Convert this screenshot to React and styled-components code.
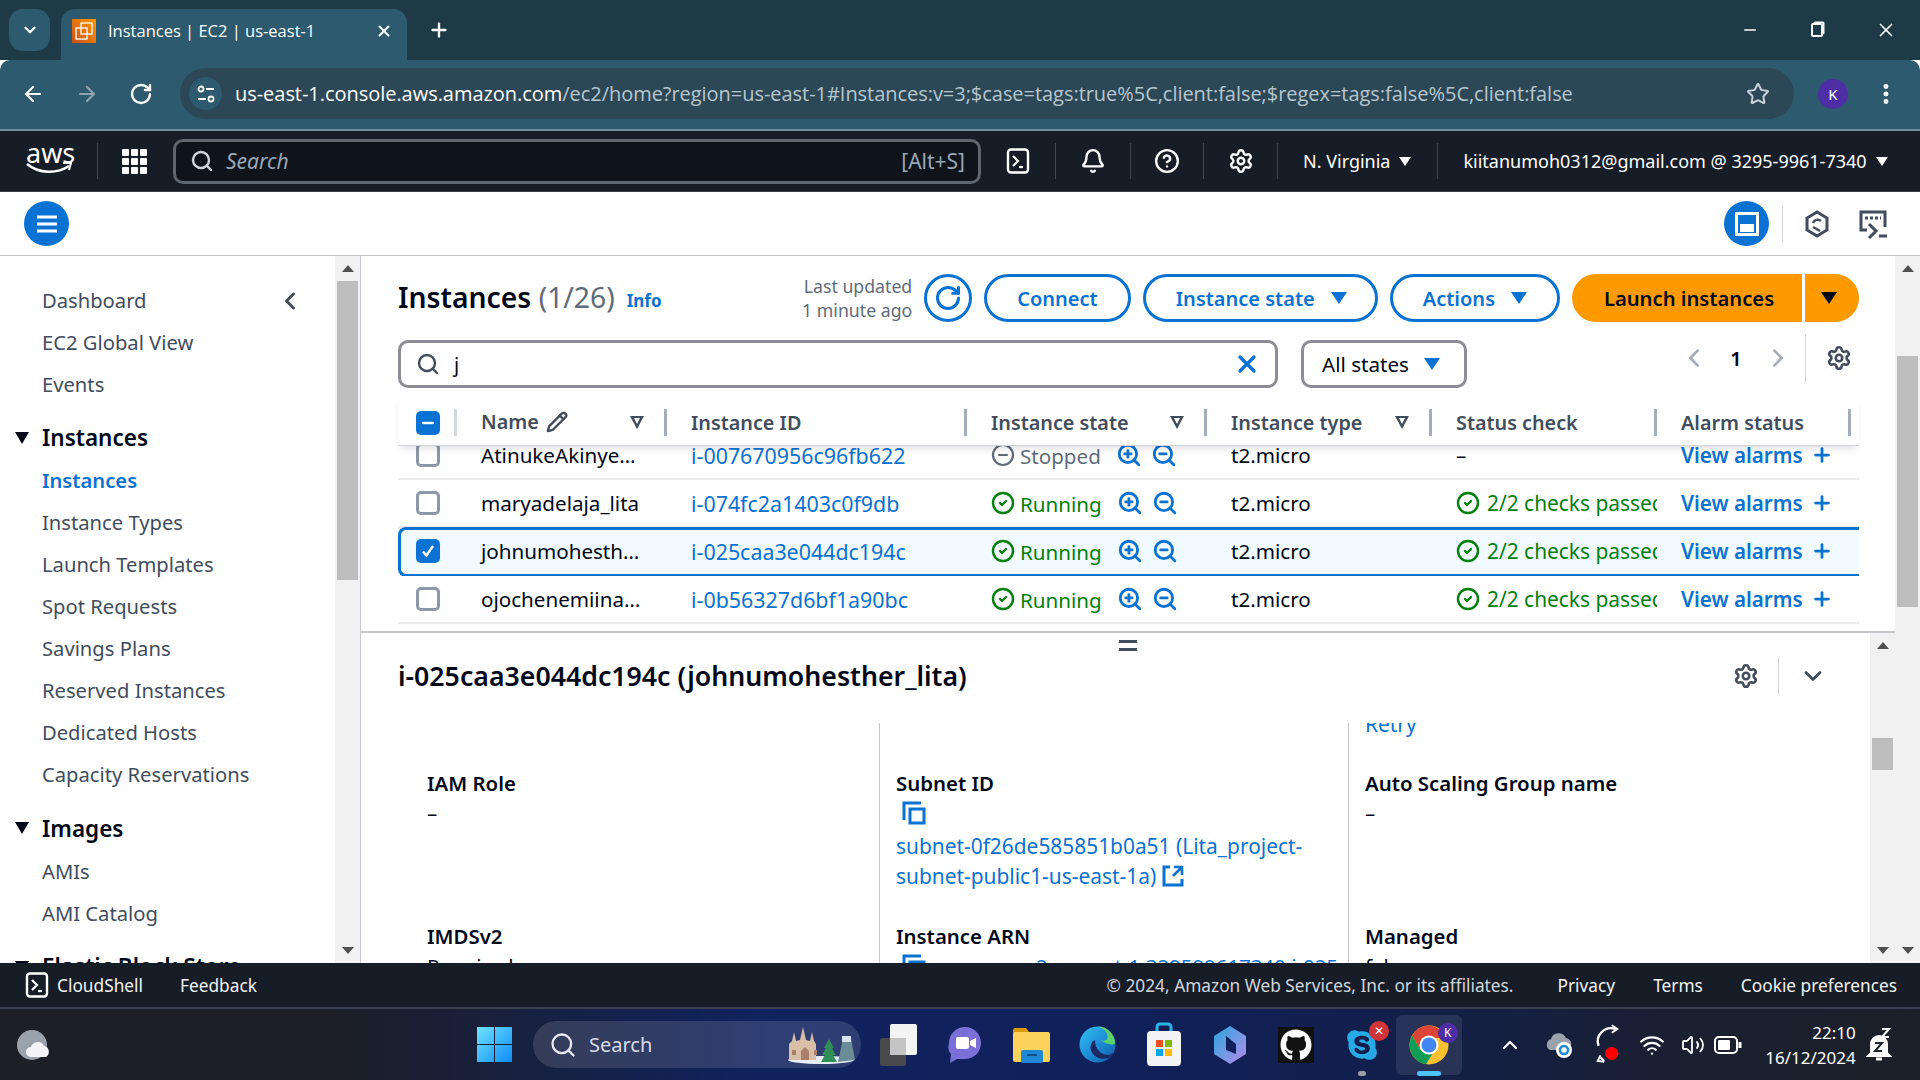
import React from 'react';
import styled, { createGlobalStyle } from 'styled-components';
import {
  ArrowLeft, ArrowRight, Bell, ChevronDown, ChevronLeft, ChevronRight, ChevronUp, CircleCheck,
  CircleHelp, CircleMinus, EllipsisVertical, Minus, Pencil, Plus, RotateCw, Search, Settings,
  Star, Volume2, Wifi, X, ZoomIn, ZoomOut,
} from 'lucide-react';
import { FaGithub, FaSkype } from 'react-icons/fa';

const LINK = '#0972d3';
const GREEN = '#037f0c';
const tableCols = '59px 210px 300px 240px 225px 225px 202px';

const GlobalStyle = createGlobalStyle`
  html, body { margin: 0; padding: 0; background: #fff; }
  * { box-sizing: border-box; }
  body { font-family: "Noto Sans", "Open Sans", sans-serif; color: #16191f; }
`;

const Page = styled.div`
  width: 1920px;
  height: 1080px;
  display: flex;
  flex-direction: column;
  overflow: hidden;
`;

/* chrome */
const TabStrip = styled.div`
  height: 60px;
  background: #1f3a47;
  display: flex;
  align-items: flex-start;
  padding: 9px 0 0 9px;
  color: #fff;
`;
const TabSearch = styled.div`
  width: 41px;
  height: 42px;
  border-radius: 14px;
  background: #2d5a6e;
  display: flex;
  align-items: center;
  justify-content: center;
`;
const Tab = styled.div`
  width: 346px;
  height: 51px;
  margin-left: 11px;
  background: #2d5a6e;
  border-radius: 14px 14px 0 0;
  display: flex;
  align-items: center;
  padding: 0 14px 8px 11px;
  font-family: "Open Sans", sans-serif;
  font-size: 16.5px;
`;
const Favicon = styled.div`
  width: 24px;
  height: 24px;
  background: linear-gradient(45deg, #c8511b, #ff9900);
  display: flex;
  align-items: center;
  justify-content: center;
`;
const TabTitle = styled.span`
  margin-left: 12px;
  flex: 1;
`;
const NewTab = styled.div`
  margin: 10px 0 0 21px;
  display: flex;
`;
const WinControls = styled.div`
  margin-left: auto;
  display: flex;
  align-items: center;
  height: 42px;
  gap: 52px;
  padding-right: 23px;
`;
const RestoreIcon = styled.div`
  width: 12px;
  height: 14px;
  border: 2px solid #fff;
  border-radius: 2px;
  box-shadow: 2px -2px 0 -0.5px #fff;
`;
const Toolbar = styled.div`
  height: 71px;
  background: #2d5a6e;
  border-bottom: 2px solid #6d8f9e;
  border-radius: 10px 10px 0 0;
  display: flex;
  align-items: center;
  padding: 0 0 2px 21px;
  color: #fff;
`;
const ToolIcon = styled.div`
  width: 54px;
  display: flex;
  opacity: ${p => (p.$dim ? 0.45 : 1)};
`;
const Omnibox = styled.div`
  width: 1614px;
  height: 51px;
  margin-left: -3px;
  background: #2c4857;
  border-radius: 26px;
  display: flex;
  align-items: center;
  padding: 0 24px 0 9px;
`;
const SiteInfo = styled.div`
  width: 33px;
  height: 33px;
  border-radius: 50%;
  background: #2d5a6e;
  display: flex;
  align-items: center;
  justify-content: center;
  flex: none;
`;
const Url = styled.div`
  margin-left: 13px;
  flex: 1;
  font-family: "Open Sans", sans-serif;
  font-size: 20px;
  letter-spacing: -0.04px;
  color: #b6c6ce;
  white-space: nowrap;
  b { font-weight: 400; color: #fff; }
`;
const Avatar = styled.div`
  width: 30px;
  height: 30px;
  margin-left: 24px;
  border-radius: 50%;
  background: #4e2ea5;
  font-size: 15px;
  display: flex;
  align-items: center;
  justify-content: center;
`;
const MenuDots = styled.div`
  margin-left: 25px;
  display: flex;
`;

/* aws nav */
const AwsNav = styled.div`
  height: 61px;
  background: #161d27;
  border-bottom: 1px solid #3b424c;
  display: flex;
  align-items: center;
  color: #fff;
  font-size: 18px;
`;
const Logo = styled.div`
  width: 98px;
  height: 36px;
  border-right: 1px solid #414750;
  padding-left: 26px;
  display: flex;
  flex-direction: column;
  font-size: 27px;
  line-height: 19px;
`;
const GridIcon = styled.div`
  width: 25px;
  height: 25px;
  margin: 0 26px 0 24px;
  display: grid;
  grid-template-columns: repeat(3, 7px);
  gap: 2px;
  span { background: #fff; border-radius: 1px; }
`;
const NavSearch = styled.div`
  width: 808px;
  height: 45px;
  background: #0f141a;
  border: 3px solid #5f6670;
  border-radius: 10px;
  display: flex;
  align-items: center;
  padding: 0 13px 0 14px;
  color: #9ba7b6;
  font-size: 21px;
`;
const NavPlaceholder = styled.span`
  font-style: italic;
  margin-left: 12px;
  flex: 1;
`;
const NavIconCell = styled.div`
  width: ${p => p.$w || 75}px;
  height: 36px;
  display: flex;
  align-items: center;
  justify-content: center;
  border-right: 1px solid #414750;
`;
const NavText = styled.div`
  display: flex;
  align-items: center;
  gap: 9px;
  white-space: nowrap;
  padding: 0 ${p => p.$pr || 0}px 0 ${p => p.$pl || 0}px;
  height: 36px;
  border-right: ${p => (p.$sep ? '1px solid #414750' : '0')};
`;
const Caret = styled.span`
  width: 0;
  height: 0;
  border-left: ${p => p.$s || 6}px solid transparent;
  border-right: ${p => p.$s || 6}px solid transparent;
  border-top: ${p => (p.$s || 6) * 1.6}px solid ${p => p.$c || '#fff'};
  flex: none;
`;

/* sub bar */
const SubBar = styled.div`
  height: 64px;
  border-bottom: 1px solid #c6c6cd;
  display: flex;
  align-items: center;
  padding: 0 32px 0 24px;
  background: #fff;
`;
const RoundBlue = styled.div`
  width: 45px;
  height: 45px;
  border-radius: 50%;
  background: ${LINK};
  display: flex;
  align-items: center;
  justify-content: center;
  margin-left: ${p => (p.$right ? 'auto' : 0)};
`;
const SubSep = styled.div`
  width: 1px;
  height: 36px;
  margin: 0 22px 0 13px;
  background: #d1d5db;
`;

/* body */
const Body = styled.div`
  height: 707px;
  display: flex;
  overflow: hidden;
`;
const Sidebar = styled.div`
  width: 361px;
  flex: none;
  display: flex;
  border-right: 1px solid #c6c6cd;
`;
const SideNav = styled.nav`
  width: 335px;
  padding: 22.5px 0 0 42px;
  position: relative;
  overflow: hidden;
`;
const SideCollapse = styled.div`
  position: absolute;
  top: 31px;
  left: 276px;
  display: flex;
`;
const SideItem = styled.div`
  height: 42px;
  line-height: 42px;
  font-size: 20.2px;
  white-space: nowrap;
  color: ${p => (p.$active ? LINK : '#414d5c')};
  font-weight: ${p => (p.$active ? 600 : 400)};
`;
const SideHead = styled.div`
  height: 42px;
  margin: 12px 0 0.5px -27px;
  display: flex;
  align-items: center;
  gap: 13px;
  font-size: 22.5px;
  font-weight: 600;
  color: #000716;
  white-space: nowrap;
`;
const Scrollbar = styled.div`
  width: 25px;
  flex: none;
  background: #f1f1f1;
  display: flex;
  flex-direction: column;
  padding: 0 2px 1px;
`;
const ScrollArrow = styled.div`
  height: 24px;
  flex: none;
  display: flex;
  align-items: center;
  justify-content: center;
  margin-top: ${p => (p.$down ? 'auto' : 0)};
  &::before {
    content: '';
    border-left: 6px solid transparent;
    border-right: 6px solid transparent;
    ${p => (p.$down ? 'border-top' : 'border-bottom')}: 7px solid #505050;
  }
`;
const Thumb = styled.div`
  flex: none;
  background: #bdbdbd;
  margin-top: ${p => p.$top}px;
  height: ${p => p.$h}px;
`;

const Main = styled.main`
  width: 1534px;
  flex: none;
  display: flex;
  flex-direction: column;
`;
const UpperPane = styled.section`
  height: 375px;
  padding: 18px 36px 0 37px;
  overflow: hidden;
`;
const HeadRow = styled.div`
  height: 48px;
  display: flex;
  align-items: center;
`;
const Title = styled.h1`
  margin: 0 0 2px;
  font-size: 28.3px;
  font-weight: 600;
  color: #000716;
  white-space: nowrap;
  span { font-weight: 400; color: #5f6b7a; }
`;
const InfoLink = styled.a`
  margin: 5px 0 0 12px;
  font-size: 17px;
  font-weight: 700;
  color: ${LINK};
`;
const Updated = styled.div`
  margin-left: auto;
  text-align: right;
  font-size: 17.7px;
  line-height: 24px;
  color: #5f6b7a;
  white-space: nowrap;
`;
const RefreshBtn = styled.div`
  width: 48px;
  height: 48px;
  margin: 0 12px;
  border: 3px solid ${LINK};
  border-radius: 50%;
  display: flex;
  align-items: center;
  justify-content: center;
`;
const Btn = styled.div`
  height: 48px;
  border: 3px solid ${LINK};
  border-radius: 24px;
  padding: 0 ${p => p.$pr || 30}px 0 30px;
  margin-right: ${p => p.$mr || 14}px;
  display: flex;
  align-items: center;
  gap: 16px;
  color: ${LINK};
  font-size: 20px;
  font-weight: 600;
  white-space: nowrap;
`;
const LaunchBtn = styled.div`
  width: 230px;
  height: 48px;
  padding-left: 4px;
  background: #ff9900;
  border-radius: 24px 0 0 24px;
  display: flex;
  align-items: center;
  justify-content: center;
  font-size: 20.2px;
  font-weight: 600;
  color: #000716;
  white-space: nowrap;
`;
const LaunchDrop = styled.div`
  width: 54px;
  height: 48px;
  margin-left: 3px;
  padding-right: 6px;
  background: #ff9900;
  border-radius: 0 24px 24px 0;
  display: flex;
  align-items: center;
  justify-content: center;
`;
const FilterRow = styled.div`
  height: 48px;
  margin-top: 18px;
  display: flex;
  align-items: center;
`;
const FilterBox = styled.div`
  width: 880px;
  height: 48px;
  border: 3px solid #8d8d95;
  border-radius: 10px;
  display: flex;
  align-items: center;
  padding: 0 14px 0 15px;
  font-size: 20px;
  color: #000716;
`;
const FilterValue = styled.span`
  margin-left: 14px;
  flex: 1;
`;
const StatesSelect = styled.div`
  width: 166px;
  height: 48px;
  margin-left: 23px;
  border: 3px solid #8d8d95;
  border-radius: 10px;
  display: flex;
  align-items: center;
  padding-left: 18px;
  gap: 15px;
  font-size: 20.6px;
  color: #000716;
  white-space: nowrap;
`;
const Pager = styled.div`
  margin: -12px 0 0 auto;
  display: flex;
  align-items: center;
  font-size: 20px;
  font-weight: 600;
  color: #000716;
`;
const PageNum = styled.span`
  width: 54px;
  text-align: center;
`;
const PagerGear = styled.div`
  height: 48px;
  width: 54px;
  margin-left: 12px;
  border-left: 1px solid #d1d5db;
  display: flex;
  align-items: center;
  padding-left: 20px;
`;
const TableHead = styled.div`
  height: 50px;
  margin-top: 8px;
  padding-top: 4px;
  display: grid;
  grid-template-columns: ${tableCols};
  align-items: center;
  position: relative;
  z-index: 2;
  background: #fff;
  border-bottom: 1px solid #d1d5db;
  box-shadow: 0 5px 8px -3px rgba(0, 7, 22, 0.14);
`;
const HeadCell = styled.div`
  height: 27px;
  display: flex;
  align-items: center;
  justify-content: space-between;
  padding: 0 20px 0 24px;
  margin-right: ${p => (p.$last ? 8 : 0)}px;
  border-right: 3px solid #a5adb8;
  color: #414d5c;
  font-size: 19.8px;
  font-weight: 600;
  white-space: nowrap;
`;
const CheckCell = styled(HeadCell)`
  padding: 0 0 0 18px;
  border-right: 3px solid #d5d8dc;
`;
const NameLabel = styled.span`
  display: flex;
  align-items: center;
  gap: 7px;
  margin-top: -2px;
`;
const FilterCaret = styled.span`
  width: 0;
  height: 0;
  position: relative;
  border-left: 7px solid transparent;
  border-right: 7px solid transparent;
  border-top: 13px solid #414d5c;
  &::after {
    content: '';
    position: absolute;
    top: -11px;
    left: -3.5px;
    border-left: 3.5px solid transparent;
    border-right: 3.5px solid transparent;
    border-top: 6.5px solid #fff;
  }
`;
const Check = styled.div`
  width: 24px;
  height: 24px;
  border-radius: 5px;
  border: ${p => (p.$on ? '0' : '3px solid #8d99a8')};
  background: ${p => (p.$on ? LINK : '#fff')};
  display: flex;
  align-items: center;
  justify-content: center;
  flex: none;
`;
const TableBody = styled.div`
  height: 185px;
  overflow: hidden;
`;
const RowList = styled.div`
  margin-top: -14px;
`;
const Row = styled.div`
  height: 48px;
  display: grid;
  grid-template-columns: ${tableCols};
  align-items: center;
  position: relative;
  font-size: 20.6px;
  color: #000716;
  background: ${p => (p.$sel ? '#f1faff' : '#fff')};
  border-bottom: 2px solid ${p => (p.$sel ? 'transparent' : '#e9ebed')};
  ${p => p.$sel && `
    &::before {
      content: '';
      position: absolute;
      inset: -1px 0 -3px;
      border: 3px solid ${LINK};
      border-right: 0;
      border-radius: 8px 0 0 8px;
      pointer-events: none;
    }
  `}
`;
const Cell = styled.div`
  padding-left: ${p => (p.$check ? 18 : 24)}px;
  display: flex;
  align-items: center;
  gap: ${p => p.$gap || 0}px;
  white-space: nowrap;
  overflow: hidden;
  min-width: 0;
  font-size: ${p => p.$fs || 20.6}px;
  color: ${p => p.$color || 'inherit'};
  font-weight: ${p => (p.$bold ? 600 : 400)};
`;
const StateText = styled.span`
  margin: 2px 15px 0 5px;
  color: ${p => p.$color};
`;
const StatusClip = styled.span`
  color: ${GREEN};
  margin-left: 7px;
  font-size: 20.9px;
`;
const ZoomBtn = styled.span`
  display: flex;
  margin-right: 9px;
`;

/* lower */
const LowerPane = styled.section`
  height: 332px;
  display: flex;
  border-top: 2px solid #c6c6cd;
  position: relative;
`;
const DragHandle = styled.div`
  position: absolute;
  top: 7px;
  left: 758px;
  width: 18px;
  height: 11px;
  border-top: 3px solid #414d5c;
  border-bottom: 3px solid #414d5c;
`;
const LowerContent = styled.div`
  width: 1509px;
  padding: 0 0 0 37px;
  display: flex;
  flex-direction: column;
  overflow: hidden;
`;
const DetailHead = styled.div`
  height: 90px;
  flex: none;
  display: flex;
  align-items: center;
  padding-bottom: 5px;
`;
const DetailTitle = styled.h2`
  margin: 0;
  font-size: 26.7px;
  font-weight: 600;
  color: #000716;
  white-space: nowrap;
`;
const DetailTools = styled.div`
  margin-left: auto;
  display: flex;
  align-items: center;
  padding-right: 43px;
`;
const ToolSep = styled.div`
  width: 1px;
  height: 36px;
  margin: 0 20px 0 19px;
  background: #d1d5db;
`;
const Columns = styled.div`
  flex: 1;
  display: flex;
  min-height: 0;
`;
const Col = styled.div`
  width: ${p => p.$w}px;
  padding: 45px 0 0 ${p => p.$pl}px;
  border-right: ${p => (p.$sep ? '1px solid #c6c6cd' : 0)};
  overflow: hidden;
  flex: none;
`;
const Field = styled.div`
  height: 153px;
  font-size: 20.4px;
  line-height: 30px;
  color: #000716;
`;
const FieldLabel = styled.div`
  font-weight: 600;
`;
const FieldLink = styled.div`
  color: ${LINK};
  font-size: 20.9px;
`;
const Retry = styled.div`
  color: ${LINK};
  font-size: 20.9px;
  line-height: 30px;
  margin: -59px 0 29px;
  height: 30px;
`;
const CopyLine = styled.div`
  height: 30px;
  margin: 0 0 3px 6px;
  display: flex;
  align-items: center;
  gap: 8px;
  white-space: nowrap;
  color: ${LINK};
`;
const ExtIcon = styled.span`
  display: inline-flex;
  vertical-align: -3px;
  margin-left: 6px;
`;

/* footer */
const Footer = styled.footer`
  height: 46px;
  background: #161d27;
  border-bottom: 2px solid #3a4150;
  display: flex;
  align-items: center;
  padding: 0 23px 0 24px;
  color: #f2f3f3;
  font-size: 17.3px;
  white-space: nowrap;
`;
const ShellLink = styled.div`
  display: flex;
  align-items: center;
  gap: 7px;
`;
const FootLink = styled.span`
  margin-left: ${p => p.$ml}px;
  color: ${p => (p.$dim ? '#d1d5db' : '#f2f3f3')};
`;
const FootCopy = styled(FootLink)`
  margin-left: auto;
`;

/* taskbar */
const Taskbar = styled.div`
  height: 71px;
  background: linear-gradient(90deg, #1c1f26 0%, #1c1f26 17%, #11225f 40%, #10205a 58%, #121f4c 72%, #1a2030 88%, #1b2029 100%);
  display: flex;
  align-items: center;
  color: #fff;
`;
const Weather = styled.div`
  margin-left: 17px;
  width: 460px;
  display: flex;
`;
const StartIcon = styled.div`
  width: 56px;
  display: flex;
`;
const TaskSearch = styled.div`
  width: 328px;
  height: 47px;
  background: rgba(255, 255, 255, 0.13);
  border-radius: 24px;
  display: flex;
  align-items: center;
  padding: 0 5px 0 16px;
  font-size: 20px;
  color: #d8dce6;
`;
const TaskSearchText = styled.span`
  margin-left: 12px;
  flex: 1;
`;
const TaskIcons = styled.div`
  margin-left: 5px;
  display: flex;
`;
const TaskSlot = styled.div`
  width: 66.2px;
  height: 60px;
  display: flex;
  align-items: center;
  justify-content: center;
  position: relative;
  border-radius: 6px;
  background: ${p => (p.$active ? 'rgba(255,255,255,0.09)' : 'transparent')};
`;
const GithubTile = styled.div`
  background: #111;
  padding: 2px;
  display: flex;
`;
const TaskDot = styled.span`
  position: absolute;
  bottom: -1px;
  left: 50%;
  transform: translateX(-50%);
  width: ${p => p.$w}px;
  height: 5px;
  border-radius: 3px;
  background: ${p => p.$c};
`;
const Badge = styled.span`
  position: absolute;
  top: ${p => p.$top}px;
  right: ${p => p.$right}px;
  width: 20px;
  height: 20px;
  border-radius: 50%;
  background: ${p => p.$bg};
  color: #fff;
  font-size: 12px;
  display: flex;
  align-items: center;
  justify-content: center;
`;
const Tray = styled.div`
  flex: 1;
  margin-left: 10px;
  display: flex;
  align-items: center;
  padding-left: 23px;
`;
const TraySlot = styled.div`
  width: ${p => p.$w}px;
  display: flex;
  justify-content: center;
`;
const Clock = styled.div`
  width: 105px;
  text-align: right;
  font-size: 17px;
  line-height: 25px;
`;

const Terminal = ({ size = 26 }) => (
  <svg width={size} height={size} viewBox="0 0 26 26" fill="none" stroke="#fff">
    <rect x="3" y="1.5" width="20" height="23" rx="3" strokeWidth="2.4" />
    <path d="M8 8l5 5-5 5" strokeWidth="2.2" />
    <path d="M14 19h4" strokeWidth="2.2" />
  </svg>
);

const Tick = () => (
  <svg width="16" height="16" viewBox="0 0 16 16" fill="none" stroke="#fff" strokeWidth="2.4">
    <path d="M3 8.5l3.4 4L13 3" />
  </svg>
);

const CopyIcon = () => (
  <svg width="24" height="24" viewBox="0 0 24 24" fill="none" stroke={LINK} strokeWidth="3" style={{ flex: 'none' }}>
    <path d="M2 19V2h17" />
    <rect x="8" y="8" width="14" height="14" />
  </svg>
);

const ExternalIcon = () => (
  <svg width="22" height="22" viewBox="0 0 22 22" fill="none" stroke={LINK} strokeWidth="3">
    <path d="M8 2H2v18h18v-6" />
    <path d="M12 2h8v8M20 2l-9 9" strokeWidth="2.6" />
  </svg>
);

const WindowsLogo = () => (
  <svg width="35" height="35" viewBox="0 0 35 35">
    <defs>
      <linearGradient id="win" x1="0" y1="0" x2="1" y2="1">
        <stop offset="0" stopColor="#6fe3ff" />
        <stop offset="1" stopColor="#0f8cf5" />
      </linearGradient>
    </defs>
    <path fill="url(#win)" d="M0 0h17v17H0zM18 0h17v17H18zM0 18h17v17H0zM18 18h17v17H18z" />
  </svg>
);

const CastleArt = () => (
  <svg width="70" height="38" viewBox="0 0 70 38">
    <ellipse cx="35" cy="34" rx="33" ry="4" fill="#e8eef6" />
    <path fill="#d9bfa8" d="M3 34V18l3-3 2-9 2 9 4-1 3-13 3 13 4 1 2-9 2 9 2 3v16z" />
    <path fill="#a9806a" d="M15 34v-9l4-4 4 4v9zM6 24h4v5H6zM28 24h3v5h-3z" />
    <path fill="#6b8c96" d="M52 36l5-24 8 0 4 22z" />
    <path fill="#2f8f56" d="M43 13l5 9h-2l4 7h-3l4 7H35l4-7h-3l4-7h-2z" />
    <path fill="#d7e4ef" d="M56 10h9v6h-9z" />
  </svg>
);

const TaskView = () => (
  <svg width="38" height="46" viewBox="0 0 38 46">
    <rect x="0" y="16" width="26" height="28" rx="2" fill="#4a4a4c" />
    <rect x="10" y="2" width="27" height="31" rx="2" fill="#f4f4f4" />
    <rect x="10" y="16" width="16" height="17" fill="#c4c4c4" />
  </svg>
);

const MeetIcon = () => (
  <svg width="34" height="38" viewBox="0 0 34 38">
    <path fill="#7a6fd6" d="M17 1c9 0 16 7 16 16s-7 16-16 16H9l-7 4 1-9C0 25 0 21 1 17 1 8 8 1 17 1z" />
    <rect x="8" y="11" width="13" height="12" rx="2" fill="#fff" />
    <path fill="#fff" d="M22 15l6-3v10l-6-3z" />
  </svg>
);

const FolderIcon = () => (
  <svg width="37" height="36" viewBox="0 0 37 36">
    <path fill="#d99a0b" d="M0 3a2 2 0 012-2h11l4 5H0z" />
    <rect x="0" y="5" width="37" height="30" rx="2" fill="#fbd35a" />
    <rect x="8" y="23" width="22" height="13" rx="2" fill="#1e88d6" />
    <rect x="14" y="27" width="10" height="2" fill="#0c4f8a" />
  </svg>
);

const EdgeIcon = () => (
  <svg width="37" height="37" viewBox="0 0 37 37">
    <defs>
      <linearGradient id="edge" x1="0" y1="0" x2="1" y2="1">
        <stop offset="0" stopColor="#35c1f1" />
        <stop offset="0.5" stopColor="#1e8fd8" />
        <stop offset="1" stopColor="#0c59a4" />
      </linearGradient>
    </defs>
    <circle cx="18.5" cy="18.5" r="18" fill="url(#edge)" />
    <path fill="#5ad36b" d="M36 17c0-9-8-16.500-17.500-16.500C27 3 30 9 28 13c-1 2-4 2-6 1 4 4 14 6 14 3z" />
    <path fill="#1c2a63" d="M16 14c-5 2-6 9-2 14 3 4 9 6 15 4 3-1 5-3 6-5-5 3-12 2-15-2-3-3-4-7-4-11z" />
  </svg>
);

const StoreIcon = () => (
  <svg width="36" height="46" viewBox="0 0 36 46">
    <path d="M11 10V5a3 3 0 013-3h8a3 3 0 013 3v5" fill="none" stroke="#27b6e8" strokeWidth="3" />
    <rect x="1" y="9" width="34" height="35" rx="4" fill="#f4f4f6" />
    <rect x="10" y="18" width="7" height="7" fill="#f25022" />
    <rect x="19" y="18" width="7" height="7" fill="#7fba00" />
    <rect x="10" y="27" width="7" height="7" fill="#00a4ef" />
    <rect x="19" y="27" width="7" height="7" fill="#ffb900" />
  </svg>
);

const CopilotIcon = () => (
  <svg width="32" height="38" viewBox="0 0 32 38">
    <defs>
      <linearGradient id="cop" x1="0" y1="0" x2="1" y2="1">
        <stop offset="0" stopColor="#2aa7e0" />
        <stop offset="1" stopColor="#b58be8" />
      </linearGradient>
    </defs>
    <path fill="url(#cop)" d="M16 0l16 10v18L16 38 0 28V10z" />
    <path fill="#10205a" d="M12 10l10 8v10l-10-4z" />
  </svg>
);

const ChromeIcon = () => (
  <svg width="40" height="40" viewBox="0 0 40 40">
    <circle cx="20" cy="20" r="19.500" fill="#fbc02d" />
    <path fill="#db4437" d="M20 .5A19.500 19.500 0 003 10.500L11 24l9-11h17A19.500 19.500 0 0020 .5z" />
    <path fill="#0f9d58" d="M3 10.500A19.500 19.500 0 0017 39.300l8-13-14-2z" />
    <circle cx="20" cy="20" r="9.500" fill="#fff" />
    <circle cx="20" cy="20" r="7.500" fill="#4285f4" />
  </svg>
);

const CloudSync = () => (
  <svg width="32" height="28" viewBox="0 0 32 28">
    <path fill="#9aa3ad" d="M7 19a6 6 0 011-11 8 8 0 0115-1c4 1 6 4 5 8l-8 4z" />
    <circle cx="21" cy="19" r="8" fill="#fff" />
    <circle cx="21" cy="19" r="4" fill="none" stroke="#1e88d6" strokeWidth="2.500" />
  </svg>
);

const SyncAlert = () => (
  <svg width="32" height="46" viewBox="0 0 32 46">
    <path d="M24 6A14 14 0 006 24M8 36a14 14 0 004 4" fill="none" stroke="#fff" strokeWidth="2.500" />
    <path d="M20 2l6 4-6 4M8 34l-3 6 7 1" fill="none" stroke="#fff" strokeWidth="2" />
    <circle cx="20" cy="32" r="7" fill="#f00" />
  </svg>
);

const BatteryIcon = () => (
  <svg width="28" height="22" viewBox="0 0 28 22" fill="none" stroke="#fff" strokeWidth="2">
    <rect x="1" y="3" width="22" height="16" rx="4" />
    <rect x="4" y="6" width="12" height="10" rx="1" fill="#fff" stroke="none" />
    <path d="M26 8v6" strokeWidth="3" />
  </svg>
);

const SnoozeBell = () => (
  <svg width="28" height="38" viewBox="0 0 28 38" fill="none" stroke="#fff" strokeWidth="2">
    <path d="M5 27V18a8 8 0 0116 0v9l3 3H2z" fill="#fff" />
    <path d="M10 33h6" strokeWidth="3" />
    <path d="M16 3h7l-7 8h7" />
    <path d="M9 17h7l-7 8h7" stroke="#1b2029" />
  </svg>
);

const sideTop = ['Dashboard', 'EC2 Global View', 'Events'];
const sideInstances = ['Instance Types', 'Launch Templates', 'Spot Requests', 'Savings Plans', 'Reserved Instances', 'Dedicated Hosts', 'Capacity Reservations'];

const rows = [
  { name: 'AtinukeAkinye…', id: 'i-007670956c96fb622', stopped: true },
  { name: 'maryadelaja_lita', id: 'i-074fc2a1403c0f9db' },
  { name: 'johnumohesth…', id: 'i-025caa3e044dc194c', sel: true },
  { name: 'ojochenemiina…', id: 'i-0b56327d6bf1a90bc' },
];

const HeadFilter = ({ label, last, filter }) => (
  <HeadCell $last={last}>
    {label}
    {filter && <FilterCaret />}
  </HeadCell>
);

const InstanceRow = ({ row }) => (
  <Row $sel={row.sel}>
    <Cell $check>
      <Check $on={row.sel}>{row.sel && <Tick />}</Check>
    </Cell>
    <Cell>{row.name}</Cell>
    <Cell $color={LINK} $fs={21.4}>{row.id}</Cell>
    <Cell>
      {row.stopped
        ? <CircleMinus size={24} color="#5f6b7a" strokeWidth={2.2} />
        : <CircleCheck size={24} color={GREEN} strokeWidth={2.4} />}
      <StateText $color={row.stopped ? '#5f6b7a' : GREEN}>{row.stopped ? 'Stopped' : 'Running'}</StateText>
      <ZoomBtn><ZoomIn size={26} color={LINK} strokeWidth={2.6} /></ZoomBtn>
      <ZoomBtn><ZoomOut size={26} color={LINK} strokeWidth={2.6} /></ZoomBtn>
    </Cell>
    <Cell>t2.micro</Cell>
    <Cell>
      {row.stopped ? '–' : (
        <>
          <CircleCheck size={24} color={GREEN} strokeWidth={2.4} style={{ flex: 'none' }} />
          <StatusClip>2/2 checks passed</StatusClip>
        </>
      )}
    </Cell>
    <Cell $color={LINK} $bold $gap={8}>
      View alarms <Plus size={22} color={LINK} strokeWidth={3} />
    </Cell>
  </Row>
);

const App = () => (
  <Page>
    <GlobalStyle />
    <TabStrip>
      <TabSearch><ChevronDown size={18} color="#fff" strokeWidth={3} /></TabSearch>
      <Tab>
        <Favicon>
          <svg width="18" height="18" viewBox="0 0 18 18" fill="none" stroke="#fff" strokeWidth="1.3">
            <rect x="6" y="1" width="11" height="11" />
            <rect x="1" y="6" width="11" height="11" />
          </svg>
        </Favicon>
        <TabTitle>Instances | EC2 | us-east-1</TabTitle>
        <X size={18} color="#fff" strokeWidth={2.6} />
      </Tab>
      <NewTab><Plus size={22} color="#fff" strokeWidth={2.6} /></NewTab>
      <WinControls>
        <Minus size={18} color="#fff" strokeWidth={2} />
        <RestoreIcon />
        <X size={22} color="#fff" strokeWidth={1.8} />
      </WinControls>
    </TabStrip>

    <Toolbar>
      <ToolIcon><ArrowLeft size={24} color="#fff" strokeWidth={2.2} /></ToolIcon>
      <ToolIcon $dim><ArrowRight size={24} color="#fff" strokeWidth={2.2} /></ToolIcon>
      <ToolIcon><RotateCw size={24} color="#fff" strokeWidth={2.4} /></ToolIcon>
      <Omnibox>
        <SiteInfo>
          <svg width="20" height="20" viewBox="0 0 20 20" fill="none" stroke="#fff" strokeWidth="1.800">
            <circle cx="5" cy="5" r="2.500" />
            <path d="M10 5h8M2 15h8" />
            <circle cx="15" cy="15" r="2.500" />
          </svg>
        </SiteInfo>
        <Url>
          <b>us-east-1.console.aws.amazon.com</b>/ec2/home?region=us-east-1#Instances:v=3;$case=tags:true%5C,client:false;$regex=tags:false%5C,client:false
        </Url>
        <Star size={24} color="#c6d2d8" strokeWidth={2} />
      </Omnibox>
      <Avatar>K</Avatar>
      <MenuDots><EllipsisVertical size={26} color="#fff" strokeWidth={2.6} /></MenuDots>
    </Toolbar>

    <AwsNav>
      <Logo>
        aws
        <svg width="46" height="12" viewBox="0 0 46 12" fill="none" stroke="#fff" strokeWidth="2.500">
          <path d="M1 2c12 10 30 10 42 2" />
          <path d="M37 1h8l-2 7" strokeWidth="2" />
        </svg>
      </Logo>
      <GridIcon>
        {[...Array(9)].map((_, i) => <span key={i} />)}
      </GridIcon>
      <NavSearch>
        <Search size={24} color="#d1d5db" strokeWidth={2.4} />
        <NavPlaceholder>Search</NavPlaceholder>
        <span>[Alt+S]</span>
      </NavSearch>
      <NavIconCell $w={75}><Terminal /></NavIconCell>
      <NavIconCell><Bell size={26} color="#fff" strokeWidth={2.2} /></NavIconCell>
      <NavIconCell $w={73}><CircleHelp size={26} color="#fff" strokeWidth={2.2} /></NavIconCell>
      <NavIconCell $w={74}><Settings size={26} color="#fff" strokeWidth={2.2} /></NavIconCell>
      <NavText $pl={25} $pr={26} $sep>N. Virginia <Caret /></NavText>
      <NavText $pl={25}>kiitanumoh0312@gmail.com @ 3295-9961-7340 <Caret /></NavText>
    </AwsNav>

    <SubBar>
      <RoundBlue>
        <svg width="24" height="20" viewBox="0 0 24 20" fill="none" stroke="#fff" strokeWidth="3">
          <path d="M2 3h20M2 10h20M2 17h20" />
        </svg>
      </RoundBlue>
      <RoundBlue $right>
        <svg width="26" height="26" viewBox="0 0 26 26" fill="none">
          <rect x="2.500" y="2.500" width="21" height="21" stroke="#fff" strokeWidth="3" />
          <rect x="6" y="13" width="14" height="8" fill="#fff" />
        </svg>
      </RoundBlue>
      <SubSep />
      <svg width="24" height="28" viewBox="0 0 24 28" fill="none" stroke="#414d5c" strokeWidth="3">
        <path d="M12 2l10 6v12l-10 6-10-6V8z" />
        <path d="M8 13a5 5 0 018-2M8 17l7 4" strokeWidth="2.500" />
      </svg>
      <svg width="30" height="30" viewBox="0 0 30 30" fill="none" stroke="#414d5c" strokeWidth="3" style={{ marginLeft: 29 }}>
        <path d="M9 21H3V3h24v15" />
        <path d="M7 9h16" strokeDasharray="3 2" />
        <path d="M11 15l7 7-7 7" />
        <path d="M21 27h8" />
      </svg>
    </SubBar>

    <Body>
      <Sidebar>
        <SideNav>
          <SideCollapse><ChevronLeft size={28} color="#414d5c" strokeWidth={2.6} /></SideCollapse>
          {sideTop.map(s => <SideItem key={s}>{s}</SideItem>)}
          <SideHead><Caret $s={7.500} $c="#000716" />Instances</SideHead>
          <SideItem $active>Instances</SideItem>
          {sideInstances.map(s => <SideItem key={s}>{s}</SideItem>)}
          <SideHead><Caret $s={7.500} $c="#000716" />Images</SideHead>
          <SideItem>AMIs</SideItem>
          <SideItem>AMI Catalog</SideItem>
          <SideHead><Caret $s={7.500} $c="#000716" />Elastic Block Store</SideHead>
        </SideNav>
        <Scrollbar>
          <ScrollArrow />
          <Thumb $top={1} $h={299} />
          <ScrollArrow $down />
        </Scrollbar>
      </Sidebar>

      <Main>
        <UpperPane>
          <HeadRow>
            <Title>Instances <span>(1/26)</span></Title>
            <InfoLink>Info</InfoLink>
            <Updated>Last updated<br />1 minute ago</Updated>
            <RefreshBtn><RotateCw size={28} color={LINK} strokeWidth={2.6} /></RefreshBtn>
            <Btn $mr={12}>Connect</Btn>
            <Btn $pr={28} $mr={12}>Instance state <Caret $s={8} $c={LINK} /></Btn>
            <Btn $mr={12}>Actions <Caret $s={8} $c={LINK} /></Btn>
            <LaunchBtn>Launch instances</LaunchBtn>
            <LaunchDrop><Caret $s={8} $c="#000716" /></LaunchDrop>
          </HeadRow>

          <FilterRow>
            <FilterBox>
              <Search size={24} color="#414d5c" strokeWidth={2.4} />
              <FilterValue>j</FilterValue>
              <X size={28} color={LINK} strokeWidth={2.8} />
            </FilterBox>
            <StatesSelect>All states <Caret $s={8} $c={LINK} /></StatesSelect>
            <Pager>
              <ChevronLeft size={30} color="#a5adb8" strokeWidth={2} />
              <PageNum>1</PageNum>
              <ChevronRight size={30} color="#a5adb8" strokeWidth={2} />
              <PagerGear><Settings size={26} color="#414d5c" strokeWidth={2.4} /></PagerGear>
            </Pager>
          </FilterRow>

          <TableHead>
            <CheckCell>
              <Check $on><Minus size={16} color="#fff" strokeWidth={4} /></Check>
            </CheckCell>
            <HeadCell>
              <NameLabel>Name <Pencil size={22} color="#414d5c" strokeWidth={2.6} /></NameLabel>
              <FilterCaret />
            </HeadCell>
            <HeadFilter label="Instance ID" />
            <HeadFilter label="Instance state" filter />
            <HeadFilter label="Instance type" filter />
            <HeadFilter label="Status check" />
            <HeadFilter label="Alarm status" last />
          </TableHead>
          <TableBody>
            <RowList>
              {rows.map(r => <InstanceRow key={r.id} row={r} />)}
            </RowList>
          </TableBody>
        </UpperPane>

        <LowerPane>
          <DragHandle />
          <LowerContent>
            <DetailHead>
              <DetailTitle>i-025caa3e044dc194c (johnumohesther_lita)</DetailTitle>
              <DetailTools>
                <Settings size={26} color="#414d5c" strokeWidth={2.4} />
                <ToolSep />
                <ChevronDown size={28} color="#414d5c" strokeWidth={2.4} />
              </DetailTools>
            </DetailHead>
            <Columns>
              <Col $w={482} $pl={29} $sep>
                <Field>
                  <FieldLabel>IAM Role</FieldLabel>
                  –
                </Field>
                <Field>
                  <FieldLabel>IMDSv2</FieldLabel>
                  Required
                </Field>
              </Col>
              <Col $w={469} $pl={16} $sep>
                <Field>
                  <FieldLabel>Subnet ID</FieldLabel>
                  <CopyLine><CopyIcon /></CopyLine>
                  <FieldLink>
                    subnet-0f26de585851b0a51 (Lita_project-<br />
                    subnet-public1-us-east-1a)<ExtIcon><ExternalIcon /></ExtIcon>
                  </FieldLink>
                </Field>
                <Field>
                  <FieldLabel>Instance ARN</FieldLabel>
                  <CopyLine><CopyIcon />arn:aws:ec2:us-east-1:329599617340:i-025caa3e044dc194c</CopyLine>
                </Field>
              </Col>
              <Col $w={500} $pl={16}>
                <Retry>Retry</Retry>
                <Field>
                  <FieldLabel>Auto Scaling Group name</FieldLabel>
                  –
                </Field>
                <Field>
                  <FieldLabel>Managed</FieldLabel>
                  false
                </Field>
              </Col>
            </Columns>
          </LowerContent>
          <Scrollbar>
            <ScrollArrow />
            <Thumb $top={81} $h={32} />
            <ScrollArrow $down />
          </Scrollbar>
        </LowerPane>
      </Main>

      <Scrollbar>
        <ScrollArrow />
        <Thumb $top={76} $h={251} />
        <ScrollArrow $down />
      </Scrollbar>
    </Body>

    <Footer>
      <ShellLink><Terminal />CloudShell</ShellLink>
      <FootLink $ml={37}>Feedback</FootLink>
      <FootCopy $dim>© 2024, Amazon Web Services, Inc. or its affiliates.</FootCopy>
      <FootLink $ml={44}>Privacy</FootLink>
      <FootLink $ml={38}>Terms</FootLink>
      <FootLink $ml={38}>Cookie preferences</FootLink>
    </Footer>

    <Taskbar>
      <Weather>
        <svg width="34" height="32" viewBox="0 0 34 32">
          <circle cx="15" cy="16" r="15" fill="#9aa3ad" />
          <path fill="#f4f4f6" d="M14 28a5 5 0 010-10 7 7 0 0113-1 6 6 0 012 11z" />
        </svg>
      </Weather>
      <StartIcon><WindowsLogo /></StartIcon>
      <TaskSearch>
        <Search size={28} color="#e8eaf0" strokeWidth={2} />
        <TaskSearchText>Search</TaskSearchText>
        <CastleArt />
      </TaskSearch>
      <TaskIcons>
        <TaskSlot><TaskView /></TaskSlot>
        <TaskSlot><MeetIcon /></TaskSlot>
        <TaskSlot><FolderIcon /></TaskSlot>
        <TaskSlot><EdgeIcon /></TaskSlot>
        <TaskSlot><StoreIcon /></TaskSlot>
        <TaskSlot><CopilotIcon /></TaskSlot>
        <TaskSlot><GithubTile><FaGithub size={32} color="#fff" /></GithubTile></TaskSlot>
        <TaskSlot>
          <FaSkype size={34} color="#27a9e6" />
          <Badge $top={6} $right={7} $bg="#d13438">✕</Badge>
          <TaskDot $w={8} $c="#9aa0a6" />
        </TaskSlot>
        <TaskSlot $active>
          <ChromeIcon />
          <Badge $top={8} $right={4} $bg="#4e2ea5">K</Badge>
          <TaskDot $w={24} $c="#4cc2ff" />
        </TaskSlot>
      </TaskIcons>
      <Tray>
        <TraySlot $w={30}><ChevronUp size={24} color="#fff" strokeWidth={2.2} /></TraySlot>
        <TraySlot $w={68}><CloudSync /></TraySlot>
        <TraySlot $w={30}><SyncAlert /></TraySlot>
        <TraySlot $w={58}><Wifi size={26} color="#fff" strokeWidth={2} /></TraySlot>
        <TraySlot $w={24}><Volume2 size={26} color="#fff" strokeWidth={1.800} /></TraySlot>
        <TraySlot $w={46}><BatteryIcon /></TraySlot>
        <Clock>22:10<br />16/12/2024</Clock>
        <TraySlot $w={48}><SnoozeBell /></TraySlot>
      </Tray>
    </Taskbar>
  </Page>
);

export default App;
